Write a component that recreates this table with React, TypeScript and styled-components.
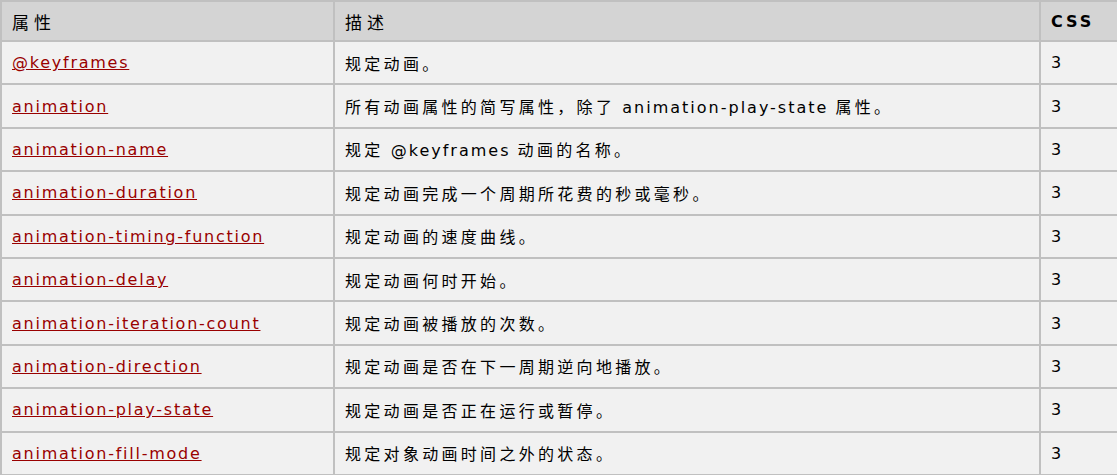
import React from "react";
import styled, { createGlobalStyle } from "styled-components";

const Global = createGlobalStyle`
  html, body { margin: 0; padding: 0; background: #ffffff; overflow: hidden; }
  body { font-family: "DejaVu Sans", Verdana, "Noto Sans CJK SC", sans-serif; }
`;

const Table = styled.table`
  border-collapse: collapse;
  width: 1119px;
  table-layout: fixed;
  font-size: 16px;
  font-family: "DejaVu Sans", Verdana, "Noto Sans CJK SC", sans-serif;
`;

const HeadCell = styled.th<{ $w: number; $bold?: boolean }>`
  width: ${(p) => p.$w}px;
  background: #d4d4d4;
  border: 2px solid #c0c0c0;
  height: 40px;
  padding: 0 10px;
  text-align: left;
  font-size: ${(p) => (p.$bold ? "16px" : "17px")};
  font-weight: ${(p) => (p.$bold ? 700 : 400)};
  letter-spacing: ${(p) => (p.$bold ? "3px" : "5px")};
  color: #000;
  box-sizing: border-box;
`;

const Cell = styled.td`
  background: #f1f1f1;
  border: 2px solid #c0c0c0;
  height: 43.4px;
  padding: 0 10px;
  color: #000;
  vertical-align: middle;
  white-space: nowrap;
  box-sizing: border-box;
`;

const Desc = styled.span`
  font-size: 16px;
  letter-spacing: 3.3px;
`;

const Latin = styled.span`
  letter-spacing: 2px;
`;

const Link = styled.a`
  color: #990000;
  text-decoration: underline;
  letter-spacing: 1.75px;
`;

const rows: [string, string][] = [
  ["@keyframes", "规定动画。"],
  ["animation", "所有动画属性的简写属性，除了 animation-play-state 属性。"],
  ["animation-name", "规定 @keyframes 动画的名称。"],
  ["animation-duration", "规定动画完成一个周期所花费的秒或毫秒。"],
  ["animation-timing-function", "规定动画的速度曲线。"],
  ["animation-delay", "规定动画何时开始。"],
  ["animation-iteration-count", "规定动画被播放的次数。"],
  ["animation-direction", "规定动画是否在下一周期逆向地播放。"],
  ["animation-play-state", "规定动画是否正在运行或暂停。"],
  ["animation-fill-mode", "规定对象动画时间之外的状态。"],
];

function renderDesc(text: string) {
  return text
    .split(/( ?[A-Za-z@][A-Za-z@\-]* ?)/)
    .filter(Boolean)
    .map((part, i) =>
      /[A-Za-z]/.test(part) ? <Latin key={i}>{part}</Latin> : <React.Fragment key={i}>{part}</React.Fragment>
    );
}

export default function App() {
  return (
    <>
      <Global />
      <Table>
        <thead>
          <tr>
            <HeadCell $w={333}>属性</HeadCell>
            <HeadCell $w={706}>描述</HeadCell>
            <HeadCell $w={80} $bold>
              CSS
            </HeadCell>
          </tr>
        </thead>
        <tbody>
          {rows.map(([prop, desc]) => (
            <tr key={prop}>
              <Cell>
                <Link href="#">{prop}</Link>
              </Cell>
              <Cell>
                <Desc>{renderDesc(desc)}</Desc>
              </Cell>
              <Cell>3</Cell>
            </tr>
          ))}
        </tbody>
      </Table>
    </>
  );
}
